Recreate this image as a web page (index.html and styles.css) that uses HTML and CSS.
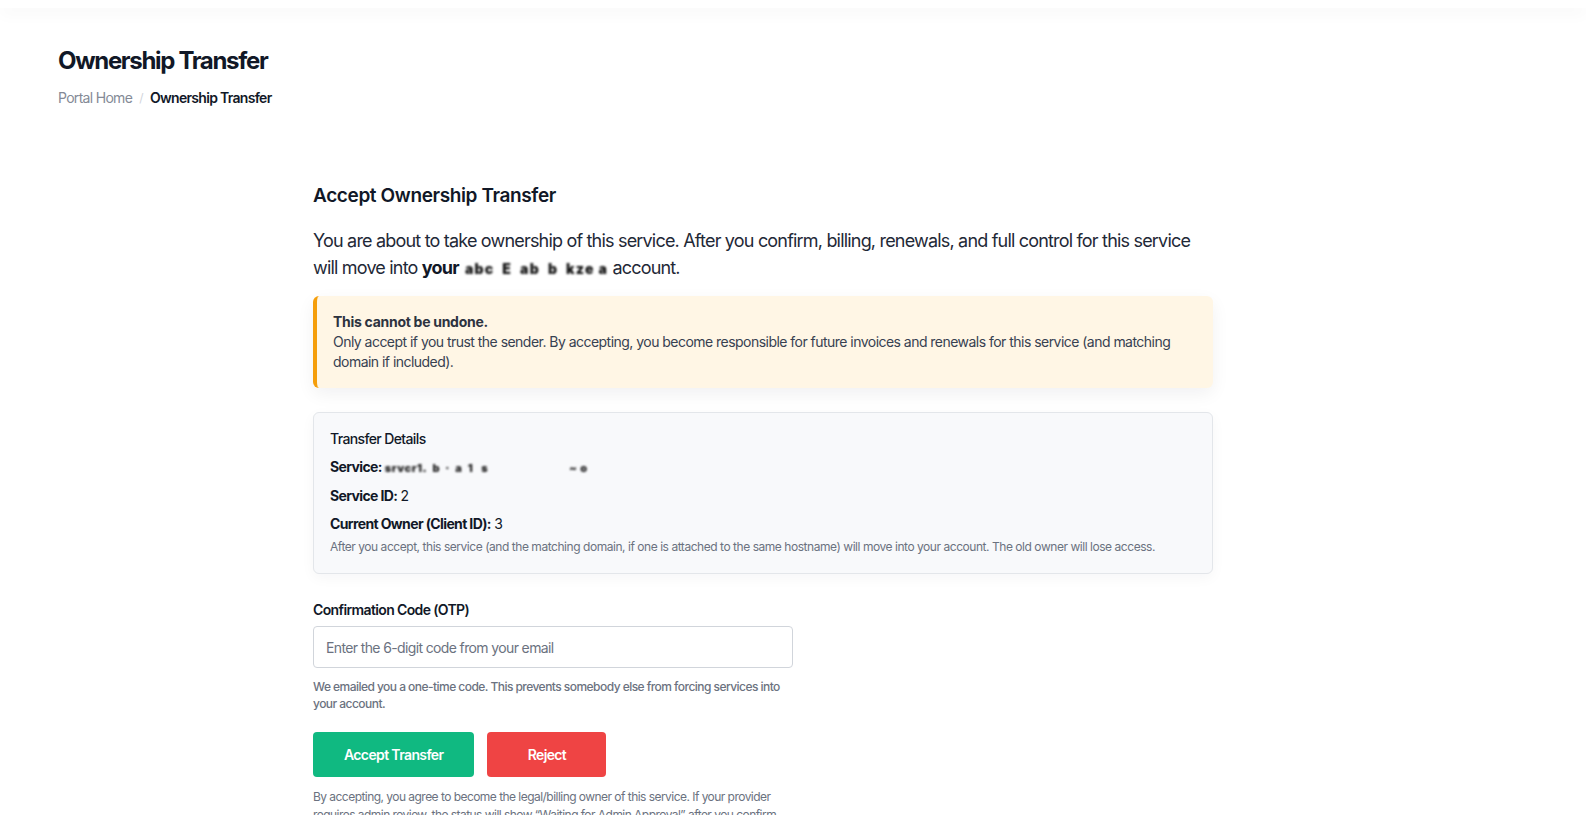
FILE: index.html
```html
<!DOCTYPE html>
<html lang="en">
<head>
<meta charset="utf-8">
<title>Ownership Transfer</title>
<link rel="stylesheet" href="styles.css">
</head>
<body>
<header class="topbar"></header>
<div class="page-head">
  <h1 class="page-title">Ownership Transfer</h1>
  <nav class="breadcrumb">
    <span class="crumb-link">Portal Home</span>
    <span class="crumb-sep">/</span>
    <span class="crumb-current">Ownership Transfer</span>
  </nav>
</div>
<main class="content">
  <h2 class="section-title">Accept Ownership Transfer</h2>
  <p class="lead">You are about to take ownership of this service. After you confirm, billing, renewals, and full control for this service will move into <strong>your</strong> <span class="redact">abc&nbsp;&nbsp;E&nbsp;&nbsp;ab&nbsp;&nbsp;b&nbsp;&nbsp;kze&nbsp;a</span> account.</p>

  <div class="warning">
    <strong class="warning-title">This cannot be undone.</strong>
    <div>Only accept if you trust the sender. By accepting, you become responsible for future invoices and renewals for this service (and matching domain if included).</div>
  </div>

  <div class="details">
    <div class="details-title">Transfer Details</div>
    <div class="row"><strong>Service:</strong><span class="redact redact-sm">srvcr1.&nbsp;&nbsp;b&nbsp;&nbsp;·&nbsp;&nbsp;a&nbsp;&nbsp;1&nbsp;&nbsp;&nbsp;s</span><span class="gap"></span><span class="redact redact-sm">~&nbsp;o</span></div>
    <div class="row"><strong>Service ID:</strong> 2</div>
    <div class="row last"><strong>Current Owner (Client ID):</strong> 3</div>
    <div class="note">After you accept, this service (and the matching domain, if one is attached to the same hostname) will move into your account. The old owner will lose access.</div>
  </div>

  <form class="otp-form">
    <label class="field-label" for="otp">Confirmation Code (OTP)</label>
    <input class="field-input" id="otp" type="text" placeholder="Enter the 6-digit code from your email">
    <div class="field-help">We emailed you a one-time code. This prevents somebody else from forcing services into your account.</div>
    <div class="actions">
      <button type="button" class="btn btn-accept">Accept Transfer</button>
      <button type="button" class="btn btn-reject">Reject</button>
    </div>
    <p class="fine-print">By accepting, you agree to become the legal/billing owner of this service. If your provider requires admin review, the status will show “Waiting for Admin Approval” after you confirm.</p>
  </form>
</main>
</body>
</html>
```

FILE: styles.css
```css
* {
  box-sizing: border-box;
  letter-spacing: -0.045em;
}

html, body {
  margin: 0;
  padding: 0;
  background: #ffffff;
}

body {
  font-family: Inter, "Noto Sans", "Liberation Sans", sans-serif;
  color: #1f2937;
  overflow: hidden;
}

.topbar {
  height: 8px;
  background: #ffffff;
  box-shadow: 0 5px 16px rgba(15, 23, 42, 0.045);
  position: relative;
  z-index: 1;
}

.page-head {
  padding: 38px 153px 0 58px;
}

.page-title {
  margin: 0 0 4px;
  font-size: 24px;
  line-height: 29px;
  font-weight: 700;
  letter-spacing: -0.055em;
  color: #111827;
}

.breadcrumb {
  display: flex;
  align-items: center;
  height: 37px;
  font-size: 14px;
  line-height: 21px;
}

.crumb-link {
  color: #848a96;
  letter-spacing: -0.05em;
}

.crumb-sep {
  color: #d1d5db;
  margin: 0 7px;
  font-size: 12px;
}

.crumb-current {
  color: #111827;
  font-weight: 600;
  letter-spacing: -0.05em;
}

.content {
  padding: 66px 0 0 313px;
  width: 1213px;
}

.section-title {
  margin: 0 0 17px;
  font-size: 19px;
  line-height: 28px;
  font-weight: 600;
  letter-spacing: -0.02em;
  color: #111827;
}

.lead {
  margin: 0 0 14px;
  font-size: 18px;
  line-height: 27px;
  color: #1f2937;
}

.lead strong {
  font-weight: 700;
  color: #111827;
}

.redact {
  display: inline-block;
  filter: blur(1.1px);
  font-weight: 900;
  color: #111;
  letter-spacing: 1.2px;
  font-size: 14px;
  margin-left: 2px;
}

.redact-sm {
  font-size: 11px;
  color: #222;
  margin-left: 3px;
  letter-spacing: 0.5px;
}

.gap {
  display: inline-block;
  width: 78px;
}

.warning {
  background: #fff6e5;
  border-left: 4px solid #f59e0b;
  border-radius: 6px;
  padding: 16px 20px 16px 16px;
  font-size: 14px;
  line-height: 20px;
  color: #374151;
  box-shadow: 0 6px 18px rgba(15, 23, 42, 0.06);
  margin-bottom: 24px;
}

.warning div {
  letter-spacing: -0.038em;
}

.warning-title {
  display: block;
  font-weight: 700;
  letter-spacing: -0.02em;
  color: #2d3340;
}

.details {
  background: #f8f9fb;
  border: 1px solid #e3e6ea;
  border-radius: 6px;
  padding: 16px 16px 17px;
  box-shadow: 0 4px 14px rgba(15, 23, 42, 0.04);
  margin-bottom: 26px;
}

.details-title {
  font-size: 14px;
  line-height: 20px;
  font-weight: 500;
  color: #111827;
  margin-bottom: 8px;
}

.row {
  font-size: 14px;
  line-height: 20px;
  color: #111827;
  margin-bottom: 8px;
}

.row strong {
  font-weight: 700;
}

.row.last {
  margin-bottom: 4px;
}

.note {
  font-size: 12px;
  line-height: 18px;
  letter-spacing: -0.038em;
  color: #6b7280;
}

.otp-form {
  width: 480px;
}

.field-label {
  display: block;
  font-size: 14px;
  line-height: 20px;
  font-weight: 600;
  color: #111827;
  margin-bottom: 6px;
}

.field-input {
  display: block;
  width: 100%;
  height: 42px;
  border: 1px solid #d1d5db;
  border-radius: 4px;
  padding: 0 12px;
  font-family: inherit;
  font-size: 14px;
  color: #111827;
  background: #fff;
  outline: none;
}

.field-input::placeholder {
  color: #6b7280;
}

.field-help {
  margin-top: 10px;
  font-size: 12px;
  line-height: 17px;
  font-weight: 500;
  color: #6b7280;
}

.actions {
  display: flex;
  gap: 13px;
  margin-top: 20px;
}

.btn {
  height: 45px;
  min-width: 119px;
  padding: 0 31px;
  border: none;
  border-radius: 4px;
  font-family: inherit;
  font-size: 14px;
  font-weight: 600;
  color: #ffffff;
  cursor: pointer;
}

.btn-accept {
  background: #10b981;
}

.btn-reject {
  background: #ef4444;
}

.fine-print {
  margin: 11px 0 0;
  font-size: 12px;
  line-height: 18px;
  color: #6b7280;
}
```
